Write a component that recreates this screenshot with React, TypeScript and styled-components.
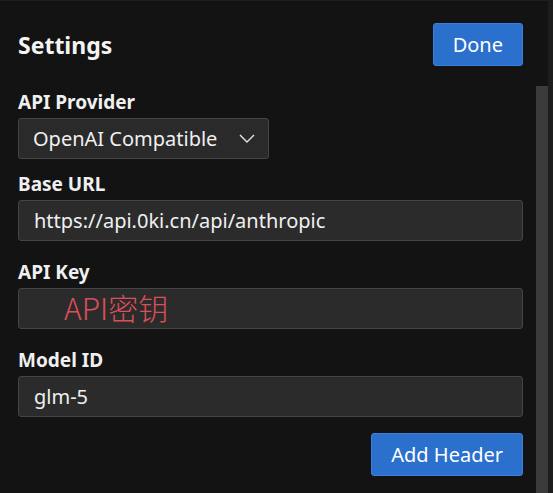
import styled, { createGlobalStyle } from "styled-components";

const GlobalStyle = createGlobalStyle`
  html, body {
    margin: 0;
    padding: 0;
    background: #131313;
  }
  body {
    font-family: "Noto Sans", "Noto Sans CJK SC", sans-serif;
    color: #f2f2f2;
  }
`;

const Window = styled.div`
  display: flex;
  width: 553px;
  height: 493px;
  overflow: hidden;
  border-top: 1px solid #1f1f1f;
  box-sizing: border-box;
`;

const Panel = styled.div`
  flex: 1;
  display: flex;
  flex-direction: column;
  padding: 22px 13px 0 18px;
`;

const TitleRow = styled.div`
  display: flex;
  align-items: center;
  justify-content: space-between;
  margin-bottom: 24px;
`;

const Title = styled.h1`
  margin: 0;
  font-size: 23px;
  font-weight: 700;
  color: #f4f4f4;
`;

const Button = styled.button`
  height: 43px;
  padding: 0 19px;
  background: #2b70cc;
  border: 1px solid #3a80da;
  border-radius: 3px;
  color: #fff;
  font-family: "Noto Sans", sans-serif;
  font-size: 20px;
  cursor: pointer;
`;

const Field = styled.div<{ $gap?: number }>`
  display: flex;
  flex-direction: column;
  align-items: flex-start;
  margin-bottom: ${(p) => p.$gap ?? 19}px;
`;

const Label = styled.label`
  font-size: 19px;
  font-weight: 700;
  color: #f0f0f0;
  line-height: 24px;
  margin-bottom: 4px;
`;

const SelectBox = styled.div`
  display: flex;
  align-items: center;
  justify-content: space-between;
  width: 251px;
  height: 41px;
  box-sizing: border-box;
  padding: 0 13px 0 14px;
  background: #2a2a2a;
  border: 1px solid #444;
  border-radius: 3px;
  font-size: 20px;
  color: #f0f0f0;
`;

const TextInput = styled.input<{ $placeholderColor?: string }>`
  width: 100%;
  height: 41px;
  box-sizing: border-box;
  padding: 0 15px;
  background: #2b2b2b;
  border: 1px solid #444;
  border-radius: 3px;
  font-family: "Noto Sans", "Noto Sans CJK SC", sans-serif;
  font-size: 20px;
  color: #f0f0f0;
  outline: none;
  &::placeholder {
    color: ${(p) => p.$placeholderColor ?? "#888"};
  }
`;

const KeyInput = styled(TextInput)`
  padding-left: 45px;
  padding-bottom: 3px;
  font-size: 30px;
  font-family: "Noto Sans CJK SC", sans-serif;
  &::placeholder {
    font-weight: 300;
  }
`;

const Footer = styled.div`
  display: flex;
  justify-content: flex-end;
  margin-top: -3px;
`;

const ScrollGutter = styled.div`
  width: 17px;
  display: flex;
  background: #131313;
`;

const Thumb = styled.div`
  width: 12px;
  margin-top: 85px;
  background: #3b3b3b;
`;

const Edge = styled.div`
  width: 5px;
  background: #1d1d1d;
`;

function Chevron() {
  return (
    <svg width="16" height="9" viewBox="0 0 16 9" fill="none">
      <path d="M1 1l7 7 7-7" stroke="#e6e6e6" strokeWidth="1.4" />
    </svg>
  );
}

export default function App() {
  return (
    <>
      <GlobalStyle />
      <Window>
        <Panel>
          <TitleRow>
            <Title>Settings</Title>
            <Button>Done</Button>
          </TitleRow>
          <Field $gap={13}>
            <Label>API Provider</Label>
            <SelectBox>
              <span>OpenAI Compatible</span>
              <Chevron />
            </SelectBox>
          </Field>
          <Field>
            <Label>Base URL</Label>
            <TextInput defaultValue="https://api.0ki.cn/api/anthropic" />
          </Field>
          <Field>
            <Label>API Key</Label>
            <KeyInput placeholder="API密钥" $placeholderColor="#d9505a" />
          </Field>
          <Field>
            <Label>Model ID</Label>
            <TextInput defaultValue="glm-5" />
          </Field>
          <Footer>
            <Button>Add Header</Button>
          </Footer>
        </Panel>
        <ScrollGutter>
          <Thumb />
          <Edge />
        </ScrollGutter>
      </Window>
    </>
  );
}
